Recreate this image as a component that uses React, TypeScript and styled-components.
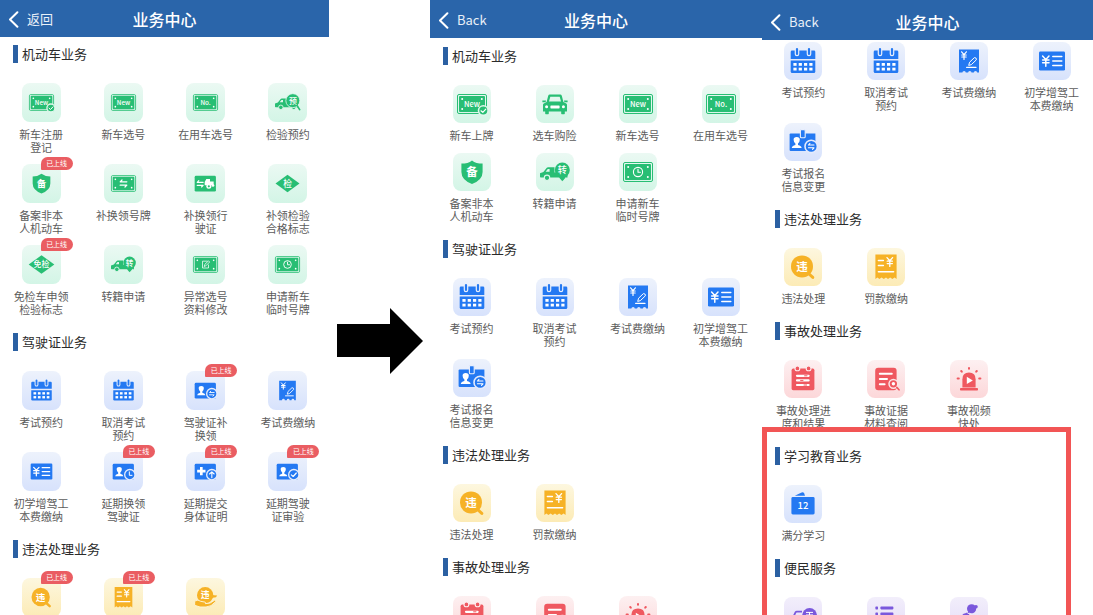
import React from "react";
import styled, { createGlobalStyle } from "styled-components";

const GlobalStyle = createGlobalStyle`
  *, *::before, *::after { box-sizing: border-box; }
  body {
    margin: 0;
    background: #fff;
    color: #333;
    font-family: "Noto Sans CJK SC", "Noto Sans", sans-serif;
  }
  button { font: inherit; color: inherit; background: none; border: 0; padding: 0; cursor: pointer; }
  h1, h2 { margin: 0; font-weight: 400; }
`;

/* ---------- palette ---------- */

type Tone = "green" | "blue" | "yellow" | "red" | "purple";

const tones: Record<Tone, { ink: string; top: string; bottom: string }> = {
  green: { ink: "#28be74", top: "#ebf9f3", bottom: "#d3f5e6" },
  blue: { ink: "#2479f2", top: "#edf2fc", bottom: "#d7e2fc" },
  yellow: { ink: "#f6b226", top: "#fdf7df", bottom: "#fcebb6" },
  red: { ink: "#ef5860", top: "#fdf0f1", bottom: "#fcd7d9" },
  purple: { ink: "#7a58dc", top: "#f2eefb", bottom: "#e4dcf8" },
};

/* ---------- layout ---------- */

const Page = styled.main`
  display: grid;
  grid-template-columns: 329fr 101fr 332fr 331fr;
  height: 100vh;
  overflow: hidden;
`;

const Screen = styled.section`
  min-width: 0;
  overflow: hidden;
`;

const Header = styled.header<{ $inset: number }>`
  display: grid;
  grid-template-columns: 1fr auto 1fr;
  align-items: center;
  height: ${(p) => p.$inset + 36}px;
  padding: ${(p) => p.$inset}px 8px 0;
  background: #2a65aa;
  color: #fff;
`;

const Title = styled.h1`
  font-size: 16px;
  line-height: 24px;
  font-weight: 500;
`;

const BackButton = styled.button`
  display: flex;
  align-items: center;
  gap: 8px;
  justify-self: start;
  font-size: 13px;
  line-height: 20px;
  color: #e9f0f8;
`;

const Services = styled.div<{ $inset: number; $gap: number }>`
  display: flex;
  flex-direction: column;
  gap: ${(p) => p.$gap}px;
  padding-top: ${(p) => p.$inset}px;
`;

const Group = styled.section`
  display: flex;
  flex-direction: column;
  gap: 20px;
`;

const GroupTitle = styled.h2`
  display: flex;
  align-items: center;
  gap: 4px;
  padding-left: 13px;
  height: 18px;
  font-size: 13px;
  line-height: 18px;
  color: #2b2b2b;

  &::before {
    content: "";
    width: 5px;
    height: 18px;
    background: #2b60a2;
  }
`;

const ItemGrid = styled.div<{ $compact: boolean }>`
  display: grid;
  grid-template-columns: repeat(4, 1fr);
  align-items: start;
  row-gap: ${(p) => (p.$compact ? 10 : 11)}px;
`;

const Item = styled.button`
  display: flex;
  flex-direction: column;
  align-items: center;
  gap: 6px;
`;

const Tile = styled.span<{ $tone: Tone; $compact: boolean }>`
  position: relative;
  display: flex;
  align-items: center;
  justify-content: center;
  width: ${(p) => (p.$compact ? 39 : 38)}px;
  height: ${(p) => (p.$compact ? 39 : 38)}px;
  border-radius: 8px;
  color: ${(p) => tones[p.$tone].ink};
  background: linear-gradient(${(p) => tones[p.$tone].top}, ${(p) => tones[p.$tone].bottom});

  svg {
    width: ${(p) => (p.$compact ? 25 : 30)}px;
    height: ${(p) => (p.$compact ? 25 : 30)}px;
    overflow: visible;
  }
`;

const OnlineBadge = styled.span`
  position: absolute;
  left: 19px;
  top: -7px;
  width: 32px;
  height: 13px;
  border-radius: 7px 7px 7px 1px;
  background: #ea5d62;
  color: #fff;
  font-size: 7px;
  line-height: 13px;
  text-align: center;
`;

const Label = styled.span`
  font-size: 11px;
  line-height: 13px;
  color: #5c5c5c;
  text-align: center;
  white-space: pre;
`;

const Highlight = styled.div`
  position: relative;
  display: flex;
  flex-direction: column;
  gap: 17px;

  &::after {
    content: "";
    position: absolute;
    inset: -20px 22px -20px 0;
    border: 5px solid #f25555;
    pointer-events: none;
  }
`;

const ArrowColumn = styled.div`
  padding: 308px 7px 0 8px;

  svg { display: block; width: 100%; }
`;

/* ---------- icons, drawn on a 30 x 30 grid ---------- */

const Glyph = ({ x, y, size, children, weight = 500 }: { x: number; y: number; size: number; children: string; weight?: number }) => (
  <text x={x} y={y} fontSize={size} fontWeight={weight} textAnchor="middle" fill="#fff">
    {children}
  </text>
);

const Plate = ({ children }: { children?: React.ReactNode }) => (
  <>
    <rect x="0.5" y="5.5" width="29" height="19" rx="1.5" fill="none" stroke="currentColor" />
    <rect x="2" y="7" width="26" height="16" rx="1" fill="currentColor" />
    <g fill="#fff">
      <circle cx="5.2" cy="10" r="1" />
      <circle cx="24.8" cy="10" r="1" />
      <circle cx="5.2" cy="20" r="1" />
      <circle cx="24.8" cy="20" r="1" />
    </g>
    {children}
  </>
);

const Stroke = ({ d, w = 1.2, color = "#fff" }: { d: string; w?: number; color?: string }) => (
  <path d={d} fill="none" stroke={color} strokeWidth={w} strokeLinecap="round" strokeLinejoin="round" />
);

const Disc = ({ cx, cy, r, halo, children }: { cx: number; cy: number; r: number; halo: string; children?: React.ReactNode }) => (
  <>
    <circle cx={cx} cy={cy} r={r} fill="currentColor" stroke={halo} strokeWidth="1.6" />
    {children}
  </>
);

const Truck = () => (
  <>
    <path
      d="M0 16.2 L3.4 15 L6.8 10.8 Q7.3 10.2 8 10.2 H14.5 V15.4 H27.5 V20.6 H0.8 Q0 20.6 0 19.8 Z M5.6 14.8 H9.6 V12 H7.8 Z"
      fill="currentColor"
      fillRule="evenodd"
    />
    <circle cx="7" cy="20.8" r="2.7" fill="currentColor" stroke="#dcf6ea" strokeWidth="1.1" />
    <circle cx="22.5" cy="20.8" r="2.7" fill="currentColor" stroke="#dcf6ea" strokeWidth="1.1" />
  </>
);

const Calendar = () => (
  <>
    <path d="M2.7 13 V6 Q2.7 4.6 4 4.6 H26 Q27.3 4.6 27.3 6 V13 Z" fill="currentColor" />
    <path d="M2.7 14.6 H27.3 V25.4 Q27.3 27 25.8 27 H4.2 Q2.7 27 2.7 25.4 Z" fill="currentColor" />
    <g stroke="#eaf0fc" strokeWidth="4.6" strokeLinecap="round">
      <path d="M9 3 V8" />
      <path d="M21 3 V8" />
    </g>
    <g stroke="currentColor" strokeWidth="2.2" strokeLinecap="round">
      <path d="M9 3 V8" />
      <path d="M21 3 V8" />
    </g>
    <g fill="#fff">
      {[5.4, 10.7, 16, 21.3].map((x) =>
        [17, 21.7].map((y) => <rect key={`${x}-${y}`} x={x} y={y} width="3.2" height="2.8" />)
      )}
    </g>
  </>
);

const Portrait = () => (
  <path
    d="M5 20.6 Q5 18.6 8.6 17.6 V16.2 Q6.8 14.6 6.8 12.4 Q6.8 9.6 9.9 9.6 Q13 9.6 13 12.4 Q13 14.6 11.2 16.2 V17.6 Q14.8 18.6 14.8 20.6 Z"
    fill="#fff"
  />
);

const Card = ({ children }: { children?: React.ReactNode }) => (
  <>
    <rect x="2" y="5.8" width="25.5" height="18.8" rx="1.6" fill="currentColor" />
    {children}
  </>
);

const SwapArrows = ({ x, y, s = 1 }: { x: number; y: number; s?: number }) => (
  <g transform={`translate(${x} ${y}) scale(${s})`}>
    <Stroke d="M4 -2 H-4 L-1.8 -4.2 M-4 2 H4 L1.8 4.2" w={1.5} />
  </g>
);

const icons = {
  plateNew: <Plate><Glyph x={15} y={17.6} size={7.5}>New</Glyph></Plate>,
  plateNewCheck: (
    <Plate>
      <Glyph x={15} y={17.6} size={7.5}>New</Glyph>
      <Disc cx={26.3} cy={21.6} r={4.8} halo="#e0f7ec"><Stroke d="M24 21.8 L25.8 23.4 L28.8 20.2" /></Disc>
    </Plate>
  ),
  plateNo: <Plate><Glyph x={15} y={17.6} size={7.5}>No.</Glyph></Plate>,
  plateSwap: <Plate><SwapArrows x={15} y={15} /></Plate>,
  plateEdit: (
    <Plate>
      <Stroke d="M17 11 H11.4 V19.2 H18.6 V15.6" w={0.9} />
      <Stroke d="M13.6 17 L14.2 14.8 L18.6 10.6 L20 12 L15.6 16.4 Z" w={0.9} />
    </Plate>
  ),
  plateClock: (
    <Plate>
      <circle cx="15" cy="15" r="4.6" fill="none" stroke="#fff" strokeWidth="1.1" />
      <Stroke d="M15 12.2 V15.3 H17.4" w={1.1} />
    </Plate>
  ),
  car: (
    <>
      <path
        d="M6.6 13 L8.2 6.8 Q8.6 5.6 9.8 5.6 H20.2 Q21.4 5.6 21.8 6.8 L23.4 13 L26.2 14.4 Q27 14.8 27 16 V22.6 H24.8 V24.6 Q24.8 25.2 24.2 25.2 H21.8 Q21.2 25.2 21.2 24.6 V22.6 H8.8 V24.6 Q8.8 25.2 8.2 25.2 H5.8 Q5.2 25.2 5.2 24.6 V22.6 H3 V16 Q3 14.8 3.8 14.4 Z M9 12.4 H21 L19.7 7.8 H10.3 Z"
        fill="currentColor"
        fillRule="evenodd"
      />
      <path d="M2.4 11.4 H6 L5.6 13.2 H2.4 Z M27.6 11.4 H24 L24.4 13.2 H27.6 Z" fill="currentColor" />
      <rect x="10.4" y="16.4" width="9.2" height="3" rx="0.6" fill="#fff" />
      <circle cx="6.6" cy="17.8" r="1.5" fill="#fff" />
      <circle cx="23.4" cy="17.8" r="1.5" fill="#fff" />
    </>
  ),
  truckTransfer: (
    <>
      <Truck />
      <path d="M16.6 17.5 L22.3 24.2 L28 17.5 Z" fill="currentColor" />
      <circle cx="22.3" cy="13" r="7.5" fill="currentColor" />
      <Glyph x={22.3} y={16.4} size={9}>转</Glyph>
    </>
  ),
  truckInspect: (
    <>
      <Truck />
      <circle cx="21.4" cy="12.8" r="8.4" fill="currentColor" stroke="#dcf6ea" />
      <path d="M26.8 19.2 L29.6 23.6" stroke="currentColor" strokeWidth="2" strokeLinecap="round" />
      <Glyph x={21.4} y={16.4} size={9.5}>预</Glyph>
    </>
  ),
  shield: (
    <>
      <path d="M15 3.4 Q19 6.6 25.6 6.6 V15 Q25.6 23 15 27 Q4.4 23 4.4 15 V6.6 Q11 6.6 15 3.4 Z" fill="currentColor" />
      <Glyph x={15} y={19.2} size={11.5} weight={700}>备</Glyph>
    </>
  ),
  diamondCheck: (
    <>
      <path d="M0.6 15 L15 4.6 L29.4 15 L15 25.4 Z" fill="currentColor" />
      <Glyph x={15} y={18.8} size={10.5}>检</Glyph>
    </>
  ),
  diamondExempt: (
    <>
      <path d="M-0.4 15 L15 4 L30.4 15 L15 26 Z" fill="currentColor" />
      <Glyph x={15} y={18.4} size={9.5}>免检</Glyph>
    </>
  ),
  vehicleCard: (
    <Card>
      <SwapArrows x={8.6} y={15.4} s={0.9} />
      <path d="M14 17 V13.2 L16 9.6 H20.4 V12.6 H24.8 V17 Z" fill="#fff" />
      <circle cx="19" cy="18.4" r="3" fill="#fff" />
      <circle cx="19" cy="18.4" r="1.3" fill="currentColor" />
      <circle cx="24" cy="17.4" r="1.6" fill="#fff" />
    </Card>
  ),
  calendar: <Calendar />,
  cardSwap: (
    <Card>
      <Portrait />
      <Disc cx={22.6} cy={18.8} r={6.2} halo="#e6edfc"><SwapArrows x={22.6} y={18.8} s={0.7} /></Disc>
    </Card>
  ),
  cardClock: (
    <Card>
      <Portrait />
      <Disc cx={22.6} cy={18.8} r={6.2} halo="#e6edfc"><Stroke d="M22 15.4 V19.6 H25.2" /></Disc>
    </Card>
  ),
  cardCheck: (
    <Card>
      <Portrait />
      <Disc cx={22.6} cy={18.8} r={6.2} halo="#e6edfc"><Stroke d="M19.6 19 L21.8 21 L25.6 16.8" w={1.4} /></Disc>
    </Card>
  ),
  cardHealth: (
    <Card>
      <path d="M8.4 9.6 H11.6 V13 H15 V16.2 H11.6 V19.6 H8.4 V16.2 H5 V13 H8.4 Z" fill="#fff" />
      <Disc cx={22.6} cy={18.8} r={6.2} halo="#e6edfc"><Stroke d="M22.6 22.4 V15.6 M19.8 18 L22.6 15.4 L25.4 18" w={1.3} /></Disc>
    </Card>
  ),
  receipt: (
    <>
      <path d="M5 3.4 H25 V26.6 H23.2 A1.7 1.7 0 0 0 19.8 26.6 H17.5 A1.7 1.7 0 0 0 14.1 26.6 H11.8 A1.7 1.7 0 0 0 8.4 26.6 H5 Z" fill="currentColor" />
      <Stroke d="M7.6 5.8 L10 8.6 L12.4 5.8 M10 8.6 V13.4 M7.8 9 H12.2 M7.8 11 H12.2" w={1.2} />
      <Stroke d="M14.8 19 L15.6 16.2 L20.4 11.6 Q22.8 11.6 22.4 13.8 L17.6 18.4 Z" w={1} />
      <Stroke d="M12.6 21.4 H22" w={1.1} />
    </>
  ),
  fee: (
    <>
      <rect x="2" y="5.4" width="26" height="19.2" rx="1.4" fill="currentColor" />
      <Stroke d="M5.6 10 L8.8 13.4 L12 10 M8.8 13.4 V20.2 M5.6 14 H12 M5.6 16.8 H12" w={1.5} />
      <Stroke d="M15.8 10.4 H24.8 M15.8 15 H24.8 M15.8 19.6 H24.8" w={1.5} />
    </>
  ),
  enroll: (
    <>
      <path d="M2.6 6.4 H27.4 V24 H2.6 Q1.6 24 1.6 23 V7.4 Q1.6 6.4 2.6 6.4 Z" fill="currentColor" />
      <rect x="12.4" y="2.6" width="4.8" height="8.2" rx="1" fill="currentColor" stroke="#e9effc" strokeWidth="1.1" />
      <g transform="translate(-1.2 0.4)"><Portrait /></g>
      <Disc cx={23.2} cy={19.4} r={6.2} halo="#e4ebfc"><SwapArrows x={23.2} y={19.4} s={0.7} /></Disc>
    </>
  ),
  violation: (
    <>
      <path d="M20 21 L24.8 25.4" stroke="currentColor" strokeWidth="3" strokeLinecap="round" />
      <circle cx="14" cy="14.4" r="11" fill="currentColor" />
      <Glyph x={14} y={18.6} size={11.5} weight={700}>违</Glyph>
    </>
  ),
  bill: (
    <>
      <path d="M4.4 2.4 H25.6 V27 L23.6 25.6 L21.4 27 L19.2 25.6 L17 27 L15 25.6 L12.8 27 L10.6 25.6 L8.4 27 L6.4 25.6 L4.4 27 Z" fill="currentColor" />
      <Stroke d="M7.4 8.4 H12.4 M7.4 13.4 H12.4 M7.4 19.8 H22.6" w={1.5} />
      <Stroke d="M16 5.6 L18.8 8.8 L21.6 5.6 M18.8 8.8 V14.4 M16.2 9.2 H21.4 M16.2 11.6 H21.4" w={1.3} />
    </>
  ),
  violationHand: (
    <>
      <circle cx="14.6" cy="12.2" r="9.8" fill="currentColor" />
      <path d="M22 12 L29 12.6 L27.6 14.8 L22 15.6 Z" fill="currentColor" />
      <Glyph x={14.6} y={16} size={10.5} weight={700}>违</Glyph>
      <path
        d="M2 19.4 Q6 16.8 9.4 19.6 L14.6 20.6 Q16 21.4 14.8 22.4 L20.6 21.6 L26 18.2 Q28 18 27.2 20 Q21.8 26.4 15.6 26.4 H8.4 L2 24.4 Z"
        fill="currentColor"
        stroke="#fdf3cf"
        strokeWidth="1.2"
      />
    </>
  ),
  progress: (
    <>
      <rect x="3.6" y="4.6" width="22.8" height="21.6" rx="1.6" fill="currentColor" />
      <g fill="currentColor" stroke="#fdeeef" strokeWidth="1.1">
        <circle cx="9.4" cy="4.4" r="2.4" />
        <circle cx="20.6" cy="4.4" r="2.4" />
      </g>
      <Stroke d="M9 11.8 H20.6 M9 16.4 H20.6 M9 21 H20.6" w={2.2} />
      <Stroke d="M16.6 11.8 H19 M12.6 16.4 H15 M16 21 H18.6" w={1} color="currentColor" />
    </>
  ),
  evidence: (
    <>
      <rect x="4.2" y="3.8" width="21.4" height="22.4" rx="3" fill="currentColor" />
      <Stroke d="M8.8 9.8 H20.8 M8.8 15 H16 M8.8 20.2 H13.6" w={2} />
      <circle cx="22.4" cy="19.8" r="4.4" fill="currentColor" stroke="#fde4e6" strokeWidth="1.5" />
      <circle cx="22.4" cy="19.8" r="1.7" fill="#fff" />
      <Stroke d="M25.8 23.4 L28 25.8" w={1.6} color="currentColor" />
    </>
  ),
  siren: (
    <>
      <path d="M8.4 23.4 V15.2 Q8.4 8.6 15 8.6 Q21.6 8.6 21.6 15.2 V23.4 Z" fill="currentColor" />
      <rect x="6" y="24" width="18" height="2.6" rx="0.8" fill="currentColor" />
      <path d="M12.8 12.8 L18.8 16.4 L12.8 20 Z" fill="#fff" />
      <g stroke="currentColor" strokeWidth="2" strokeLinecap="round">
        <path d="M15 4 V4.8" />
        <path d="M7.2 7 L7.8 7.7" />
        <path d="M22.8 7 L22.2 7.7" />
        <path d="M3.6 14.4 H4.8" />
        <path d="M26.4 14.4 H25.2" />
      </g>
    </>
  ),
  folder: (
    <>
      <path d="M6.8 6.8 L13.6 3.4 Q15.4 2.6 16.2 4.4 L17 6.8 Z" fill="currentColor" />
      <rect x="3.4" y="8" width="23.2" height="17.4" rx="1.4" fill="currentColor" />
      <Glyph x={15} y={20.2} size={9.5}>12</Glyph>
    </>
  ),
  truckPass: (
    <>
      <path d="M4.8 17 L7.6 11.2 Q8 10.6 8.8 10.6 H14" fill="none" stroke="currentColor" strokeWidth="1.8" />
      <path d="M1.4 17 H26 V23 H1.4 Z" fill="currentColor" />
      <circle cx="21.6" cy="14.4" r="7.4" fill="currentColor" />
      <Stroke d="M18.4 11.4 H24.6 M18.4 14 H24.6 M21.5 11.4 V17 M18.4 17 H24.6" w={1} />
    </>
  ),
  list: (
    <g fill="currentColor">
      {[7, 13, 19].map((y) => (
        <React.Fragment key={y}>
          <rect x="4.4" y={y - 1.4} width="2.6" height="2.8" rx="0.6" />
          <rect x="9.4" y={y - 1.4} width="13" height="2.8" rx="0.8" />
        </React.Fragment>
      ))}
    </g>
  ),
  guide: (
    <>
      <circle cx="17.6" cy="7.8" r="4.6" fill="currentColor" />
      <circle cx="22" cy="5.8" r="1.8" fill="currentColor" />
      <path d="M15 10.6 L11.4 12.2 Q7.6 12.8 6.8 17.6 V24 H17.4 L15.4 14.6 Z" fill="currentColor" />
      <Stroke d="M13 11.6 Q15 13.6 18 13.2" w={1} color="#efeafb" />
    </>
  ),
};

type IconName = keyof typeof icons;

const Icon = ({ name }: { name: IconName }) => (
  <svg viewBox="0 0 30 30" aria-hidden="true">
    {icons[name]}
  </svg>
);

/* ---------- data ---------- */

interface Service {
  icon: IconName;
  label?: string;
  name?: string;
  online?: boolean;
}

interface ServiceGroup {
  title?: string;
  tone: Tone;
  items: Service[];
}

const legacyGroups: ServiceGroup[] = [
  {
    title: "机动车业务",
    tone: "green",
    items: [
      { icon: "plateNewCheck", label: "新车注册\n登记" },
      { icon: "plateNew", label: "新车选号" },
      { icon: "plateNo", label: "在用车选号" },
      { icon: "truckInspect", label: "检验预约" },
      { icon: "shield", label: "备案非本\n人机动车", online: true },
      { icon: "plateSwap", label: "补换领号牌" },
      { icon: "vehicleCard", label: "补换领行\n驶证" },
      { icon: "diamondCheck", label: "补领检验\n合格标志" },
      { icon: "diamondExempt", label: "免检车申领\n检验标志", online: true },
      { icon: "truckTransfer", label: "转籍申请" },
      { icon: "plateEdit", label: "异常选号\n资料修改" },
      { icon: "plateClock", label: "申请新车\n临时号牌" },
    ],
  },
  {
    title: "驾驶证业务",
    tone: "blue",
    items: [
      { icon: "calendar", label: "考试预约" },
      { icon: "calendar", label: "取消考试\n预约" },
      { icon: "cardSwap", label: "驾驶证补\n换领", online: true },
      { icon: "receipt", label: "考试费缴纳" },
      { icon: "fee", label: "初学增驾工\n本费缴纳" },
      { icon: "cardClock", label: "延期换领\n驾驶证", online: true },
      { icon: "cardHealth", label: "延期提交\n身体证明", online: true },
      { icon: "cardCheck", label: "延期驾驶\n证审验", online: true },
    ],
  },
  {
    title: "违法处理业务",
    tone: "yellow",
    items: [
      { icon: "violation", name: "违法处理", online: true },
      { icon: "bill", name: "罚款缴纳", online: true },
      { icon: "violationHand", name: "违法处理业务" },
    ],
  },
];

const examItems: Service[] = [
  { icon: "calendar", label: "考试预约" },
  { icon: "calendar", label: "取消考试\n预约" },
  { icon: "receipt", label: "考试费缴纳" },
  { icon: "fee", label: "初学增驾工\n本费缴纳" },
  { icon: "enroll", label: "考试报名\n信息变更" },
];

const violationGroup: ServiceGroup = {
  title: "违法处理业务",
  tone: "yellow",
  items: [
    { icon: "violation", label: "违法处理" },
    { icon: "bill", label: "罚款缴纳" },
  ],
};

const currentGroups: ServiceGroup[] = [
  {
    title: "机动车业务",
    tone: "green",
    items: [
      { icon: "plateNewCheck", label: "新车上牌" },
      { icon: "car", label: "选车购险" },
      { icon: "plateNew", label: "新车选号" },
      { icon: "plateNo", label: "在用车选号" },
      { icon: "shield", label: "备案非本\n人机动车" },
      { icon: "truckTransfer", label: "转籍申请" },
      { icon: "plateClock", label: "申请新车\n临时号牌" },
    ],
  },
  { title: "驾驶证业务", tone: "blue", items: examItems },
  violationGroup,
  {
    title: "事故处理业务",
    tone: "red",
    items: [
      { icon: "progress", name: "事故处理进度和结果" },
      { icon: "evidence", name: "事故证据材料查阅" },
      { icon: "siren", name: "事故视频快处" },
    ],
  },
];

const scrolledGroups: ServiceGroup[] = [
  { tone: "blue", items: examItems },
  violationGroup,
  {
    title: "事故处理业务",
    tone: "red",
    items: [
      { icon: "progress", label: "事故处理进\n度和结果" },
      { icon: "evidence", label: "事故证据\n材料查阅" },
      { icon: "siren", label: "事故视频\n快处" },
    ],
  },
];

const addedGroups: ServiceGroup[] = [
  { title: "学习教育业务", tone: "blue", items: [{ icon: "folder", label: "满分学习" }] },
  {
    title: "便民服务",
    tone: "purple",
    items: [
      { icon: "truckPass", name: "车辆服务" },
      { icon: "list", name: "服务列表" },
      { icon: "guide", name: "服务指南" },
    ],
  },
];

/* ---------- parts ---------- */

const TopBar = ({ back, inset }: { back: string; inset: number }) => (
  <Header $inset={inset}>
    <BackButton type="button">
      <svg width="11" height="17" viewBox="0 0 11 17" fill="none" stroke="#fff" strokeWidth="2" strokeLinecap="round" strokeLinejoin="round" aria-hidden="true">
        <path d="M9.4 1.2 L2 8.5 L9.4 15.8" />
      </svg>
      {back}
    </BackButton>
    <Title>业务中心</Title>
  </Header>
);

const Groups = ({ groups, compact = false }: { groups: ServiceGroup[]; compact?: boolean }) => (
  <>
    {groups.map((group, g) => (
      <Group key={g}>
        {group.title && <GroupTitle>{group.title}</GroupTitle>}
        <ItemGrid $compact={compact}>
          {group.items.map((item, i) => (
            <Item key={i} type="button" aria-label={item.name}>
              <Tile $tone={group.tone} $compact={compact}>
                <Icon name={item.icon} />
                {item.online && <OnlineBadge>已上线</OnlineBadge>}
              </Tile>
              {item.label && <Label>{item.label}</Label>}
            </Item>
          ))}
        </ItemGrid>
      </Group>
    ))}
  </>
);

export default function App() {
  return (
    <>
      <GlobalStyle />
      <Page>
        <Screen>
          <TopBar back="返回" inset={1} />
          <Services $inset={8} $gap={17}>
            <Groups groups={legacyGroups} compact />
          </Services>
        </Screen>

        <ArrowColumn>
          <svg viewBox="0 0 86 66" aria-hidden="true">
            <path d="M0 16 H53 V0 L86 33 L53 66 V49 H0 Z" fill="#000" />
          </svg>
        </ArrowColumn>

        <Screen>
          <TopBar back="Back" inset={2} />
          <Services $inset={9} $gap={17}>
            <Groups groups={currentGroups} />
          </Services>
        </Screen>

        <Screen>
          <TopBar back="Back" inset={4} />
          <Services $inset={2} $gap={17}>
            <Groups groups={scrolledGroups} />
            <Highlight>
              <Groups groups={addedGroups} />
            </Highlight>
          </Services>
        </Screen>
      </Page>
    </>
  );
}
